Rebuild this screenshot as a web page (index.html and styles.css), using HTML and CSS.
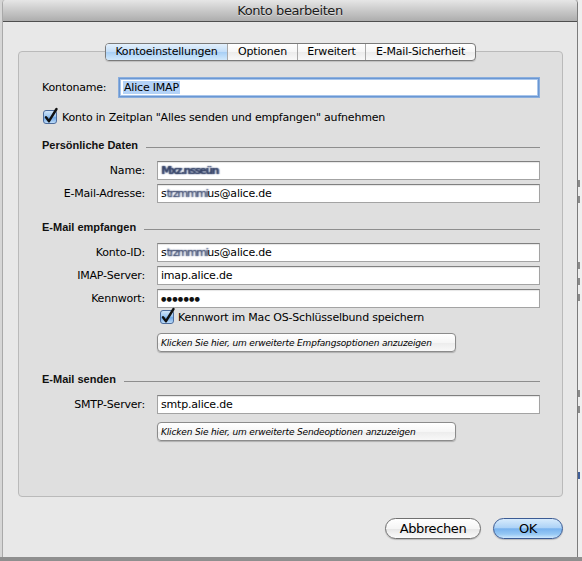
FILE: index.html
```html
<!DOCTYPE html>
<html lang="de">
<head>
<meta charset="utf-8">
<title>Konto bearbeiten</title>
<link rel="stylesheet" href="styles.css">
</head>
<body>
<div class="desktop">
  <div class="gutter"></div>
  <div class="window">
    <div class="titlebar">Konto bearbeiten</div>
    <div class="content">
      <div class="tabs">
        <div class="tab t1 active">Kontoeinstellungen</div>
        <div class="tab t2">Optionen</div>
        <div class="tab t3">Erweitert</div>
        <div class="tab t4">E-Mail-Sicherheit</div>
      </div>
      <div class="group">
        <div class="row-name">
          <span class="label-left">Kontoname:</span>
          <div class="field focus"><span class="sel">Alice IMAP</span></div>
        </div>
        <div class="check first">
          <svg viewBox="0 0 14 14" class="box"><defs><linearGradient id="cb" x1="0" y1="0" x2="0" y2="1"><stop offset="0" stop-color="#d6e8fa"/><stop offset="0.45" stop-color="#9cc6f1"/><stop offset="0.55" stop-color="#6fa7e6"/><stop offset="1" stop-color="#c4e0fa"/></linearGradient></defs><rect x="0.5" y="0.5" width="13" height="13" rx="2.5" fill="url(#cb)" stroke="#4d6c9c"/><path d="M3 7.2 L6 11.2 L13.5 -1" fill="none" stroke="#111" stroke-width="2.4" stroke-linecap="round" stroke-linejoin="round"/></svg>
          <span>Konto in Zeitplan "Alles senden und empfangen" aufnehmen</span>
        </div>

        <div class="heading h1"><span>Persönliche Daten</span><i class="rule"></i></div>
        <div class="form f1">
          <span class="label">Name:</span>
          <div class="field"><span class="smear name">Mxz.nsseün</span></div>
          <span class="label">E-Mail-Adresse:</span>
          <div class="field">s<span class="smear">trzmmmi</span>us@alice.de</div>
        </div>

        <div class="heading h2"><span>E-Mail empfangen</span><i class="rule"></i></div>
        <div class="form f2">
          <span class="label">Konto-ID:</span>
          <div class="field">s<span class="smear">trzmmmi</span>us@alice.de</div>
          <span class="label">IMAP-Server:</span>
          <div class="field">imap.alice.de</div>
          <span class="label">Kennwort:</span>
          <div class="field"><span class="dots">●●●●●●●</span></div>
        </div>
        <div class="indent">
          <div class="check second">
            <svg viewBox="0 0 14 14" class="box"><rect x="0.5" y="0.5" width="13" height="13" rx="2.5" fill="url(#cb)" stroke="#4d6c9c"/><path d="M3 7.2 L6 11.2 L13.5 -1" fill="none" stroke="#111" stroke-width="2.4" stroke-linecap="round" stroke-linejoin="round"/></svg>
            <span>Kennwort im Mac OS-Schlüsselbund speichern</span>
          </div>
          <div class="minibtn b1">Klicken Sie hier, um erweiterte Empfangsoptionen anzuzeigen</div>
        </div>

        <div class="heading h3"><span>E-Mail senden</span><i class="rule"></i></div>
        <div class="form f3">
          <span class="label">SMTP-Server:</span>
          <div class="field">smtp.alice.de</div>
        </div>
        <div class="indent">
          <div class="minibtn b2">Klicken Sie hier, um erweiterte Sendeoptionen anzuzeigen</div>
        </div>
      </div>
      <div class="footer">
        <div class="btn cancel">Abbrechen</div>
        <div class="btn ok">OK</div>
      </div>
    </div>
  </div>
  <div class="behind">
    <i class="mark m1"></i>
    <i class="mark m2"></i>
    <i class="mark m3"></i>
    <i class="mark m4"></i>
    <i class="mark m5"></i>
    <i class="mark m6"></i>
    <i class="mark m7"></i>
    <i class="mark m8 blue"></i>
  </div>
</div>
</body>
</html>
```

FILE: styles.css
```css
* { box-sizing: border-box; }
html, body { margin: 0; padding: 0; }
body {
  width: 582px;
  height: 561px;
  overflow: hidden;
  background: #8f8f8f;
  font-family: "DejaVu Sans", "Liberation Sans", sans-serif;
  font-size: 11px;
  color: #000;
  letter-spacing: -0.2px;
}
.desktop { display: flex; height: 557px; background: #cfcfcf; }
.gutter { width: 2px; flex: none; background: #d6d6d6; }
.window {
  width: 576px;
  height: 557px;
  flex: none;
  display: flex;
  flex-direction: column;
  background: #e8e8e8;
  border-left: 1px solid #a9a9a9;
  border-right: 1px solid #7c7c7c;
  border-radius: 4px 4px 0 0;
  overflow: hidden;
}
.titlebar {
  flex: none;
  height: 22px;
  background: linear-gradient(#e6e6e6, #c9c9c9 50%, #adadad);
  border-bottom: 1px solid #4f4f4f;
  text-align: center;
  font-size: 13px;
  line-height: 21px;
  color: #1b1b1b;
  letter-spacing: -0.4px;
  text-shadow: 0 1px 0 rgba(255,255,255,0.45);
}
.content {
  flex: 1;
  display: flex;
  flex-direction: column;
  padding: 21px 14px 0 15px;
}
.tabs {
  align-self: center;
  position: relative;
  z-index: 1;
  display: flex;
  height: 18px;
  border: 1px solid #7a7a7a;
  border-radius: 4px;
  overflow: hidden;
  background: linear-gradient(#ffffff, #f6f6f6 50%, #ececec 52%, #f9f9f9);
  box-shadow: 0 1px 1px rgba(0,0,0,0.15);
}
.tab {
  display: flex;
  align-items: center;
  justify-content: center;
  line-height: 16px;
}
.tab + .tab { border-left: 1px solid #a9a9a9; }
.t1 { width: 121px; }
.t2 { width: 70px; }
.t3 { width: 68px; }
.t4 { width: 110px; }
.tab.active {
  background: linear-gradient(#e3f0fc, #c2ddf8 50%, #a8cff5 52%, #d2e9fc);
}
.group {
  margin-top: -10px;
  height: 446px;
  flex: none;
  display: flex;
  flex-direction: column;
  border: 1px solid #bababa;
  border-radius: 4px;
  background: #dfdfdf;
  padding: 25px 22px 0 23px;
}
.row-name { display: flex; align-items: center; height: 21px; }
.label-left { width: 76px; flex: none; }
.field {
  height: 19px;
  display: flex;
  align-items: center;
  padding-left: 3px;
  background: #fff;
  border: 1px solid #a3a3a3;
  border-top-color: #808080;
  box-shadow: inset 0 1px 1px rgba(0,0,0,0.1);
  white-space: nowrap;
  overflow: hidden;
}
.field.focus {
  flex: 1;
  height: 21px;
  padding-left: 4px;
  border: 1px solid #8aaedd;
  box-shadow: inset 0 0 0 1px #6a97d3, inset 0 0 0 2px #a9c6ec;
}
.sel { background: #b3d2f7; padding: 0 1px; }
.check { display: flex; align-items: center; height: 14px; gap: 5px; white-space: nowrap; }
.check .box { width: 14px; height: 14px; flex: none; overflow: visible; }
.check.first { margin-top: 12px; margin-left: 1px; }
.check.second { margin-top: 2px; margin-left: 3px; gap: 4px; }
.heading {
  display: flex;
  align-items: center;
  gap: 8px;
  height: 13px;
  font-family: "Liberation Sans", "DejaVu Sans", sans-serif;
  font-weight: bold;
  font-size: 11px;
  letter-spacing: 0;
  color: #111;
}
.heading .rule { flex: 1; height: 1px; background: #8e8e8e; margin-top: 5px; }
.h1 { margin-top: 14px; }
.h2 { margin-top: 17px; }
.h3 { margin-top: 20px; }
.form {
  display: grid;
  grid-template-columns: 103px 1fr;
  column-gap: 12px;
  row-gap: 4px;
  align-items: center;
  margin-top: 10px;
}
.form .label { text-align: right; white-space: nowrap; }
.indent { padding-left: 115px; display: flex; flex-direction: column; }
.minibtn {
  width: 299px;
  height: 19px;
  display: flex;
  align-items: center;
  padding-left: 3px;
  border: 1px solid #8b8b8b;
  border-radius: 4px;
  background: linear-gradient(#ffffff, #f6f6f6 50%, #ececec 52%, #f8f8f8);
  box-shadow: 0 1px 1px rgba(0,0,0,0.22);
  font-style: italic;
  font-size: 9px;
  letter-spacing: -0.15px;
  white-space: nowrap;
  overflow: hidden;
}
.b1 { margin-top: 9px; }
.b2 { margin-top: 8px; }
.dots { font-size: 6.2px; letter-spacing: 0.2px; color: #111; }
.smear {
  color: rgba(40,50,80,0.35);
  text-shadow: 0 0 1.5px #3b4a70, 1px 0 1px rgba(90,110,160,0.6);
  letter-spacing: -1.3px;
}
.smear.name { letter-spacing: -1.6px; font-weight: bold; }
.footer {
  display: flex;
  justify-content: flex-end;
  gap: 12px;
  margin-top: 21px;
}
.btn {
  height: 21px;
  display: flex;
  align-items: center;
  justify-content: center;
  border-radius: 11px;
  border: 1px solid #707070;
  background: linear-gradient(#ffffff, #f5f5f5 50%, #e6e6e6 52%, #fbfbfb);
  box-shadow: 0 1px 1px rgba(0,0,0,0.2);
  font-size: 13px;
  letter-spacing: -0.4px;
}
.cancel { width: 96px; }
.ok {
  width: 70px;
  border-color: #3b5b94;
  background: linear-gradient(#d7ebfc, #aed3f7 45%, #78b2ee 52%, #96c8f4 80%, #cfe8fd);
}
.behind {
  flex: 1;
  background: #efefef;
  display: flex;
  flex-direction: column;
  padding-top: 180px;
  gap: 9px;
}
.mark { display: block; width: 2px; height: 7px; background: #8a8a8a; }
.m3 { margin-top: 50px; }
.m6 { margin-top: 80px; }
.m8 { margin-top: 50px; }
.blue { background: #3f5f9a; }
```
